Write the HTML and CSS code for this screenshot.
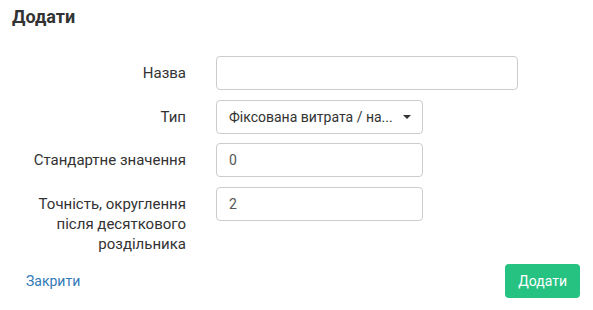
FILE: index.html
```html
<!DOCTYPE html>
<html lang="uk">

<head>
    <meta charset="UTF-8">
    <meta name="viewport" content="width=device-width, initial-scale=1.0">
    <title>Додати</title>
    <link rel="stylesheet" href="styles.css">
</head>

<body>

    <div class="modal">
        <h4 class="modal-title">Додати</h4>

        <form class="form">
            <div class="form-row">
                <label class="form-label" for="name">Назва</label>
                <input class="field field-wide" id="name" type="text">
            </div>

            <div class="form-row">
                <label class="form-label">Тип</label>
                <button type="button" class="field select">
                    <span class="select-text">Фіксована витрата / на...</span>
                    <span class="caret"></span>
                </button>
            </div>

            <div class="form-row">
                <label class="form-label" for="default">Стандартне значення</label>
                <input class="field" id="default" type="text" value="0">
            </div>

            <div class="form-row">
                <label class="form-label" for="precision">Точність, округлення після десяткового роздільника</label>
                <input class="field" id="precision" type="text" value="2">
            </div>
        </form>

        <div class="modal-footer">
            <a href="#" class="btn btn-link">Закрити</a>
            <button type="button" class="btn btn-green">Додати</button>
        </div>
    </div>

</body>

</html>
```

FILE: styles.css
```css
body {
    margin: 0;
    font-family: Roboto, "Liberation Sans", sans-serif;
    font-size: 14px;
    line-height: 20px;
    color: #333;
    background-color: #fff;
}

.modal {
    width: 593px;
    padding-top: 7px;
}

.modal-title {
    margin: 0 0 29px 0;
    padding-left: 12px;
    font-size: 18px;
    font-weight: 700;
    line-height: 20px;
    color: #333;
}

.form-row {
    display: flex;
    align-items: flex-start;
    margin-bottom: 10px;
}

.form-row:nth-child(2) {
    margin-bottom: 9px;
}

.form-label {
    width: 171px;
    margin-left: 15px;
    margin-right: 30px;
    padding-top: 7px;
    text-align: right;
    font-size: 15px;
    font-weight: 400;
}

.field {
    box-sizing: border-box;
    width: 207px;
    height: 34px;
    padding: 6px 12px;
    border: 1px solid #ccc;
    border-radius: 4px;
    background-color: #fff;
    font-family: inherit;
    font-size: 14px;
    line-height: 20px;
    color: #555;
}

.field-wide {
    width: 302px;
}

.select {
    display: flex;
    align-items: center;
    justify-content: space-between;
    padding-right: 11px;
    color: #333;
    text-align: left;
    cursor: pointer;
}

.select-text {
    white-space: nowrap;
}

.caret {
    width: 0;
    height: 0;
    border-top: 4px solid #333;
    border-left: 4px solid transparent;
    border-right: 4px solid transparent;
}

.modal-footer {
    display: flex;
    justify-content: space-between;
    align-items: center;
    padding: 0 13px;
    margin-top: 10px;
}

.btn {
    box-sizing: border-box;
    height: 34px;
    padding: 6px 12px;
    border: 1px solid transparent;
    border-radius: 4px;
    font-family: inherit;
    font-size: 14px;
    line-height: 20px;
    text-decoration: none;
}

.btn-link {
    color: #337ab7;
}

.btn-green {
    background-color: #26c281;
    color: #fff;
    cursor: pointer;
}
```
